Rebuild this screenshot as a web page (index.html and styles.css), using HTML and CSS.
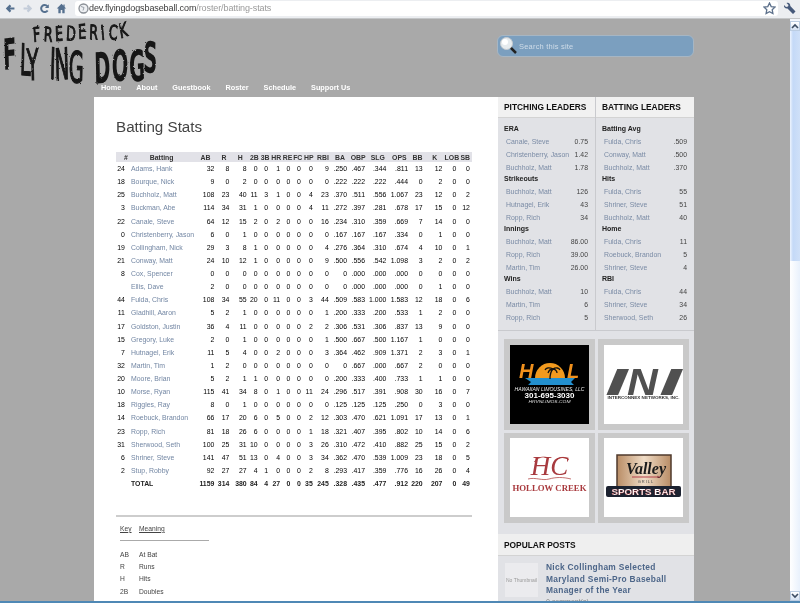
FILE: index.html
```html
<html>
<head>
    <meta charset="UTF-8">
    <link rel="stylesheet" href="styles.css">
</head>

<body>

<div class="toolbar">
    <div class="nav_buttons">
        <svg width="11" height="11" viewBox="0 0 14 14"><path d="M12 7H4M7 3L3 7l4 4" fill="none" stroke="#55708f" stroke-width="2.8"/></svg>
        <svg width="11" height="11" viewBox="0 0 14 14"><path d="M2 7h8M7 3l4 4-4 4" fill="none" stroke="#c3ccd9" stroke-width="2.8"/></svg>
        <svg width="11" height="11" viewBox="0 0 14 14"><path d="M11 9.500A4.500 4.500 0 1 1 10.600 4" fill="none" stroke="#55708f" stroke-width="2.600"/><path d="M12.500 1.500v5h-5z" fill="#55708f"/></svg>
        <svg width="11" height="11" viewBox="0 0 14 14"><path d="M7 1L1 7h2v6h3V9h2v4h3V7h2l-2-2V2H9.500v1.500z" fill="#55708f"/></svg>
    </div>
    <div class="address">
        <svg width="11" height="11" viewBox="0 0 11 11"><circle cx="5.500" cy="5.500" r="4.500" fill="#eef0f3" stroke="#8a8f96" stroke-width="1.300"/><path d="M3 3.500l3 1-1 3" fill="none" stroke="#9aa0a8"/></svg>
        <span class="url"><b>dev.flyingdogsbaseball.com</b>/roster/batting-stats</span>
        <svg class="star" width="13" height="13" viewBox="0 0 13 13"><path d="M6.500 1l1.700 3.600 3.800.500-2.800 2.600.7 3.900-3.400-1.900-3.400 1.900.7-3.900L1 5.100l3.800-.5z" fill="#fff" stroke="#5d718c" stroke-width="1.300"/></svg>
    </div>
    <svg class="wrench" width="13" height="13" viewBox="0 0 13 13"><path d="M1 3l2 2 2-.5L5.500 3 3.500 1C5.500 0 7.500 1.500 7.300 4L12.500 9.500 10 12 4.500 6.500C2.500 7 .5 5.500 1 3z" fill="#46597a"/></svg>
</div>

<div class="viewport">
    <div class="page">
        <div class="masthead">
            <svg class="logo" width="160" height="68" viewBox="0 0 160 68">
                <defs>
                    <filter id="rough" x="-5%" y="-5%" width="110%" height="110%">
                        <feTurbulence type="fractalNoise" baseFrequency="0.35" numOctaves="2" seed="4"/>
                        <feDisplacementMap in="SourceGraphic" scale="2.200"/>
                    </filter>
                </defs>
                <g filter="url(#rough)" fill="#141414">
                    <g transform="scale(0.7 1)">
                        <text class="logo_small" x="48 62 79 94 112 127 145 155 172" y="23 22 22 21 20 20 21 20 19.500" rotate="-6 4 -3 5 -4 3 -8 4 -14">FREDERICK</text>
                    </g>
                    <g transform="scale(0.9 1.8)">
                        <text class="logo_big" x="4 22 30 55 61 76 100 105 124 144 159" y="28.300 31 34 33 34 35 35 36 34 35 29.500" rotate="-3 2 -2 3 -3 2 0 -2 2 -3 3">F<tspan class="logo_thin">LYING</tspan> DOGS</text>
                    </g>
                </g>
            </svg>
            <div class="search">
                <svg width="20" height="20" viewBox="0 0 20 20"><path d="M11 11l6 6" stroke="#222" stroke-width="2.500"/><circle cx="7.500" cy="7.500" r="6" fill="#e6ebee" stroke="#c7ccd0"/><circle cx="6" cy="6" r="3" fill="#fff"/></svg>
                <span>Search this site</span>
            </div>
        </div>

        <div class="menu">
            <a>Home</a>
            <a>About</a>
            <a>Guestbook</a>
            <a>Roster</a>
            <a>Schedule</a>
            <a>Support Us</a>
        </div>

        <div class="wrap">
            <div class="content">
                <h1>Batting Stats</h1>

                <table class="stats">
                    <colgroup>
                        <col class="c_num"><col class="c_name"><col class="c_ab"><col class="c_r"><col class="c_h"><col class="c_2b"><col class="c_3b"><col class="c_hr"><col class="c_re"><col class="c_fc"><col class="c_hp"><col class="c_rbi"><col class="c_ba"><col class="c_obp"><col class="c_slg"><col class="c_ops"><col class="c_bb"><col class="c_k"><col class="c_lob"><col class="c_sb">
                    </colgroup>
                    <tr><th class="num">#</th><th>Batting</th><th>AB</th><th>R</th><th>H</th><th>2B</th><th>3B</th><th>HR</th><th>RE</th><th>FC</th><th>HP</th><th>RBI</th><th>BA</th><th>OBP</th><th>SLG</th><th>OPS</th><th>BB</th><th>K</th><th>LOB</th><th>SB</th></tr>
                    <tr><td class="num">24</td><td class="name">Adams, Hank</td><td>32</td><td>8</td><td>8</td><td>0</td><td>0</td><td>1</td><td>0</td><td>0</td><td>0</td><td>9</td><td>.250</td><td>.467</td><td>.344</td><td>.811</td><td>13</td><td>12</td><td>0</td><td>0</td></tr>
                    <tr><td class="num">18</td><td class="name">Bourque, Nick</td><td>9</td><td>0</td><td>2</td><td>0</td><td>0</td><td>0</td><td>0</td><td>0</td><td>0</td><td>0</td><td>.222</td><td>.222</td><td>.222</td><td>.444</td><td>0</td><td>2</td><td>0</td><td>0</td></tr>
                    <tr><td class="num">25</td><td class="name">Buchholz, Matt</td><td>108</td><td>23</td><td>40</td><td>11</td><td>3</td><td>1</td><td>0</td><td>0</td><td>4</td><td>23</td><td>.370</td><td>.511</td><td>.556</td><td>1.067</td><td>23</td><td>12</td><td>0</td><td>2</td></tr>
                    <tr><td class="num">3</td><td class="name">Buckman, Abe</td><td>114</td><td>34</td><td>31</td><td>1</td><td>0</td><td>0</td><td>0</td><td>0</td><td>4</td><td>11</td><td>.272</td><td>.397</td><td>.281</td><td>.678</td><td>17</td><td>15</td><td>0</td><td>12</td></tr>
                    <tr><td class="num">22</td><td class="name">Canale, Steve</td><td>64</td><td>12</td><td>15</td><td>2</td><td>0</td><td>2</td><td>0</td><td>0</td><td>0</td><td>16</td><td>.234</td><td>.310</td><td>.359</td><td>.669</td><td>7</td><td>14</td><td>0</td><td>0</td></tr>
                    <tr><td class="num">0</td><td class="name">Christenberry, Jason</td><td>6</td><td>0</td><td>1</td><td>0</td><td>0</td><td>0</td><td>0</td><td>0</td><td>0</td><td>0</td><td>.167</td><td>.167</td><td>.167</td><td>.334</td><td>0</td><td>1</td><td>0</td><td>0</td></tr>
                    <tr><td class="num">19</td><td class="name">Collingham, Nick</td><td>29</td><td>3</td><td>8</td><td>1</td><td>0</td><td>0</td><td>0</td><td>0</td><td>0</td><td>4</td><td>.276</td><td>.364</td><td>.310</td><td>.674</td><td>4</td><td>10</td><td>0</td><td>1</td></tr>
                    <tr><td class="num">21</td><td class="name">Conway, Matt</td><td>24</td><td>10</td><td>12</td><td>1</td><td>0</td><td>0</td><td>0</td><td>0</td><td>0</td><td>9</td><td>.500</td><td>.556</td><td>.542</td><td>1.098</td><td>3</td><td>2</td><td>0</td><td>2</td></tr>
                    <tr><td class="num">8</td><td class="name">Cox, Spencer</td><td>0</td><td>0</td><td>0</td><td>0</td><td>0</td><td>0</td><td>0</td><td>0</td><td>0</td><td>0</td><td>0</td><td>.000</td><td>.000</td><td>.000</td><td>0</td><td>0</td><td>0</td><td>0</td></tr>
                    <tr><td class="num"></td><td class="name">Ellis, Dave</td><td>2</td><td>0</td><td>0</td><td>0</td><td>0</td><td>0</td><td>0</td><td>0</td><td>0</td><td>0</td><td>0</td><td>.000</td><td>.000</td><td>.000</td><td>0</td><td>1</td><td>0</td><td>0</td></tr>
                    <tr><td class="num">44</td><td class="name">Fulda, Chris</td><td>108</td><td>34</td><td>55</td><td>20</td><td>0</td><td>11</td><td>0</td><td>0</td><td>3</td><td>44</td><td>.509</td><td>.583</td><td>1.000</td><td>1.583</td><td>12</td><td>18</td><td>0</td><td>6</td></tr>
                    <tr><td class="num">11</td><td class="name">Gladhill, Aaron</td><td>5</td><td>2</td><td>1</td><td>0</td><td>0</td><td>0</td><td>0</td><td>0</td><td>0</td><td>1</td><td>.200</td><td>.333</td><td>.200</td><td>.533</td><td>1</td><td>2</td><td>0</td><td>0</td></tr>
                    <tr><td class="num">17</td><td class="name">Goldston, Justin</td><td>36</td><td>4</td><td>11</td><td>0</td><td>0</td><td>0</td><td>0</td><td>0</td><td>2</td><td>2</td><td>.306</td><td>.531</td><td>.306</td><td>.837</td><td>13</td><td>9</td><td>0</td><td>0</td></tr>
                    <tr><td class="num">15</td><td class="name">Gregory, Luke</td><td>2</td><td>0</td><td>1</td><td>0</td><td>0</td><td>0</td><td>0</td><td>0</td><td>0</td><td>1</td><td>.500</td><td>.667</td><td>.500</td><td>1.167</td><td>1</td><td>0</td><td>0</td><td>0</td></tr>
                    <tr><td class="num">7</td><td class="name">Hutnagel, Erik</td><td>11</td><td>5</td><td>4</td><td>0</td><td>0</td><td>2</td><td>0</td><td>0</td><td>0</td><td>3</td><td>.364</td><td>.462</td><td>.909</td><td>1.371</td><td>2</td><td>3</td><td>0</td><td>1</td></tr>
                    <tr><td class="num">32</td><td class="name">Martin, Tim</td><td>1</td><td>2</td><td>0</td><td>0</td><td>0</td><td>0</td><td>0</td><td>0</td><td>0</td><td>0</td><td>0</td><td>.667</td><td>.000</td><td>.667</td><td>2</td><td>0</td><td>0</td><td>0</td></tr>
                    <tr><td class="num">20</td><td class="name">Moore, Brian</td><td>5</td><td>2</td><td>1</td><td>1</td><td>0</td><td>0</td><td>0</td><td>0</td><td>0</td><td>0</td><td>.200</td><td>.333</td><td>.400</td><td>.733</td><td>1</td><td>1</td><td>0</td><td>0</td></tr>
                    <tr><td class="num">10</td><td class="name">Morse, Ryan</td><td>115</td><td>41</td><td>34</td><td>8</td><td>0</td><td>1</td><td>0</td><td>0</td><td>11</td><td>24</td><td>.296</td><td>.517</td><td>.391</td><td>.908</td><td>30</td><td>16</td><td>0</td><td>7</td></tr>
                    <tr><td class="num">18</td><td class="name">Riggles, Ray</td><td>8</td><td>0</td><td>1</td><td>0</td><td>0</td><td>0</td><td>0</td><td>0</td><td>0</td><td>0</td><td>.125</td><td>.125</td><td>.125</td><td>.250</td><td>0</td><td>3</td><td>0</td><td>0</td></tr>
                    <tr><td class="num">14</td><td class="name">Roebuck, Brandon</td><td>66</td><td>17</td><td>20</td><td>6</td><td>0</td><td>5</td><td>0</td><td>0</td><td>2</td><td>12</td><td>.303</td><td>.470</td><td>.621</td><td>1.091</td><td>17</td><td>13</td><td>0</td><td>1</td></tr>
                    <tr><td class="num">23</td><td class="name">Ropp, Rich</td><td>81</td><td>18</td><td>26</td><td>6</td><td>0</td><td>0</td><td>0</td><td>0</td><td>1</td><td>18</td><td>.321</td><td>.407</td><td>.395</td><td>.802</td><td>10</td><td>14</td><td>0</td><td>6</td></tr>
                    <tr><td class="num">31</td><td class="name">Sherwood, Seth</td><td>100</td><td>25</td><td>31</td><td>10</td><td>0</td><td>0</td><td>0</td><td>0</td><td>3</td><td>26</td><td>.310</td><td>.472</td><td>.410</td><td>.882</td><td>25</td><td>15</td><td>0</td><td>2</td></tr>
                    <tr><td class="num">6</td><td class="name">Shriner, Steve</td><td>141</td><td>47</td><td>51</td><td>13</td><td>0</td><td>4</td><td>0</td><td>0</td><td>3</td><td>34</td><td>.362</td><td>.470</td><td>.539</td><td>1.009</td><td>23</td><td>18</td><td>0</td><td>5</td></tr>
                    <tr><td class="num">2</td><td class="name">Stup, Robby</td><td>92</td><td>27</td><td>27</td><td>4</td><td>1</td><td>0</td><td>0</td><td>0</td><td>2</td><td>8</td><td>.293</td><td>.417</td><td>.359</td><td>.776</td><td>16</td><td>26</td><td>0</td><td>4</td></tr>
                    <tr class="total"><td class="num"></td><td class="name">TOTAL</td><td>1159</td><td>314</td><td>380</td><td>84</td><td>4</td><td>27</td><td>0</td><td>0</td><td>35</td><td>245</td><td>.328</td><td>.435</td><td>.477</td><td>.912</td><td>220</td><td>207</td><td>0</td><td>49</td></tr>
                </table>

                <hr class="rule">

                <table class="key">
                    <tr class="key_head"><td>Key</td><td>Meaning</td></tr>
                    <tr class="key_line"><td colspan="2"></td></tr>
                    <tr><td>AB</td><td>At Bat</td></tr>
                    <tr><td>R</td><td>Runs</td></tr>
                    <tr><td>H</td><td>Hits</td></tr>
                    <tr><td>2B</td><td>Doubles</td></tr>
                </table>
            </div>

            <div class="sidebar">
                <div class="leaders">
                    <div class="leader_col">
                        <h3>PITCHING LEADERS</h3>
                        <div class="leader_body">
                            <h4>ERA</h4>
                            <div class="leader"><a>Canale, Steve</a><span>0.75</span></div>
                            <div class="leader"><a>Christenberry, Jason</a><span>1.42</span></div>
                            <div class="leader"><a>Buchholz, Matt</a><span>1.78</span></div>
                            <h4>Strikeouts</h4>
                            <div class="leader"><a>Buchholz, Matt</a><span>126</span></div>
                            <div class="leader"><a>Hutnagel, Erik</a><span>43</span></div>
                            <div class="leader"><a>Ropp, Rich</a><span>34</span></div>
                            <h4>Innings</h4>
                            <div class="leader"><a>Buchholz, Matt</a><span>86.00</span></div>
                            <div class="leader"><a>Ropp, Rich</a><span>39.00</span></div>
                            <div class="leader"><a>Martin, Tim</a><span>26.00</span></div>
                            <h4>Wins</h4>
                            <div class="leader"><a>Buchholz, Matt</a><span>10</span></div>
                            <div class="leader"><a>Martin, Tim</a><span>6</span></div>
                            <div class="leader"><a>Ropp, Rich</a><span>5</span></div>
                        </div>
                    </div>
                    <div class="leader_col">
                        <h3>BATTING LEADERS</h3>
                        <div class="leader_body">
                            <h4>Batting Avg</h4>
                            <div class="leader"><a>Fulda, Chris</a><span>.509</span></div>
                            <div class="leader"><a>Conway, Matt</a><span>.500</span></div>
                            <div class="leader"><a>Buchholz, Matt</a><span>.370</span></div>
                            <h4>Hits</h4>
                            <div class="leader"><a>Fulda, Chris</a><span>55</span></div>
                            <div class="leader"><a>Shriner, Steve</a><span>51</span></div>
                            <div class="leader"><a>Buchholz, Matt</a><span>40</span></div>
                            <h4>Home</h4>
                            <div class="leader"><a>Fulda, Chris</a><span>11</span></div>
                            <div class="leader"><a>Roebuck, Brandon</a><span>5</span></div>
                            <div class="leader"><a>Shriner, Steve</a><span>4</span></div>
                            <h4>RBI</h4>
                            <div class="leader"><a>Fulda, Chris</a><span>44</span></div>
                            <div class="leader"><a>Shriner, Steve</a><span>34</span></div>
                            <div class="leader"><a>Sherwood, Seth</a><span>26</span></div>
                        </div>
                    </div>
                </div>

                <div class="sponsors">
                    <div class="sponsor">
                        <svg class="ad ad_black" width="79" height="79" viewBox="0 0 79 79">
                            <path d="M25 33a15 15 0 0 1 30 0z" fill="#f29a1e"/>
                            <text x="9" y="33" class="hol">H</text>
                            <text x="57" y="33" class="hol">L</text>
                            <path d="M15 33h50l-4 4 3 3H18l3-3z" fill="#2390cf"/>
                            <path d="M40 34c0-5 1-8 3-10M43 24c-4-2-7-1-8 1M43 24c3-2 6-1 7 1M43 24c-2 0-4 1-5 4M43 24c2 0 4 2 4 4" fill="none" stroke="#111" stroke-width="1.300"/>
                            <text x="39.500" y="46" class="hol_name" textLength="70" lengthAdjust="spacingAndGlyphs">HAWAIIAN LIMOUSINES, LLC</text>
                            <text x="39.500" y="53" class="hol_phone" textLength="50" lengthAdjust="spacingAndGlyphs">301-695-3030</text>
                            <text x="39.500" y="58" class="hol_site" textLength="42" lengthAdjust="spacingAndGlyphs">HRVNLIMOS.COM</text>
                        </svg>
                    </div>
                    <div class="sponsor">
                        <svg class="ad" width="79" height="79" viewBox="0 0 79 79">
                            <text class="ini" transform="translate(1 50) scale(2.200 1)">I</text>
                            <text class="ini" transform="translate(23 50) scale(1.150 1)">N</text>
                            <text class="ini" transform="translate(55 50) scale(2.200 1)">I</text>
                            <text x="39.500" y="54" class="ini_name" textLength="72" lengthAdjust="spacingAndGlyphs">INTERCONNEX NETWORKS, INC.</text>
                        </svg>
                    </div>
                    <div class="sponsor">
                        <svg class="ad" width="79" height="79" viewBox="0 0 79 79">
                            <text x="39.500" y="37" class="hc">HC</text>
                            <path d="M24 24c4-5 10-6 14-4M46 22c5-4 10-3 13 0M18 41c8-2 14 2 21 0s14-2 22 0" fill="none" stroke="#a33" stroke-width="0.700"/>
                            <text x="39.500" y="52.500" class="hc_name" textLength="74" lengthAdjust="spacingAndGlyphs">HOLLOW CREEK</text>
                        </svg>
                    </div>
                    <div class="sponsor">
                        <svg class="ad" width="79" height="79" viewBox="0 0 79 79">
                            <defs>
                                <linearGradient id="tan" x1="0" x2="1"><stop offset="0" stop-color="#b98d66"/><stop offset="0.500" stop-color="#f0dcc6"/><stop offset="1" stop-color="#b98d66"/></linearGradient>
                            </defs>
                            <rect x="13" y="17" width="54" height="34" fill="url(#tan)" stroke="#4f3a2c" stroke-width="1.500"/>
                            <text x="42" y="36" class="valley">Valley</text>
                            <path d="M28 39h28" stroke="#b5404a" stroke-width="1"/>
                            <text x="42" y="45" class="grill">GRILL</text>
                            <rect x="2" y="48" width="75" height="11" rx="2" fill="#1c2230"/>
                            <text x="39.500" y="57" class="bar" textLength="64" lengthAdjust="spacingAndGlyphs">SPORTS BAR</text>
                        </svg>
                    </div>
                </div>

                <div class="popular">
                    <h3>POPULAR POSTS</h3>
                    <div class="post">
                        <div class="thumb">No Thumbnail</div>
                        <div>
                            <a class="post_title">Nick Collingham Selected Maryland Semi-Pro Baseball Manager of the Year</a>
                            <p>0 comment(s)</p>
                        </div>
                    </div>
                </div>
            </div>
        </div>
    </div>

    <div class="scrollbar">
        <div class="scroll_btn">
            <svg width="8" height="6" viewBox="0 0 8 6"><path d="M1 5l3-3 3 3" fill="none" stroke="#3d4d63" stroke-width="1.600"/></svg>
        </div>
        <div class="scroll_thumb"></div>
        <div class="scroll_track"></div>
        <div class="scroll_btn">
            <svg width="8" height="6" viewBox="0 0 8 6"><path d="M1 1l3 3 3-3" fill="none" stroke="#3d4d63" stroke-width="1.600"/></svg>
        </div>
    </div>
</div>

<div class="statusline"></div>

</body>

</html>
```

FILE: styles.css
```css
html, body {
    height: 100%;
}

body {
    margin: 0;
    height: 603px;
    overflow: hidden;
    display: flex;
    flex-direction: column;
    font-family: "Liberation Sans", Arial, sans-serif;
    background: #a9a9a9;
}

/* browser chrome */
.toolbar {
    height: 19px;
    flex: none;
    display: flex;
    align-items: center;
    background: #eceef1;
    border-bottom: 1px solid #c4c6c8;
    box-sizing: border-box;
    filter: blur(0.3px);
}

.nav_buttons {
    width: 75px;
    flex: none;
    display: flex;
    gap: 6px;
    padding: 0 0 2px 4.500px;
    box-sizing: border-box;
}

.address {
    width: 703px;
    height: 15px;
    margin-bottom: 2px;
    flex: none;
    display: flex;
    align-items: center;
    padding: 0 2px 0 3px;
    box-sizing: border-box;
    background: white;
    border-radius: 3px;
}

.url {
    flex: 1;
    font-size: 9px;
    letter-spacing: -0.1px;
    color: #9a9a9a;
}

.url b {
    font-weight: normal;
    color: #3a3a3a;
}

.wrench {
    margin: 0 0 2px 5px;
}

.viewport {
    flex: 1;
    min-height: 0;
    display: flex;
}

.page {
    flex: 1;
    min-width: 0;
    overflow: hidden;
    display: flex;
    flex-direction: column;
    filter: blur(0.3px);
}

/* header */
.masthead {
    height: 62px;
    flex: none;
    display: flex;
    align-items: flex-start;
    justify-content: space-between;
    padding-right: 96px;
}

.logo {
    flex: none;
    overflow: visible;
}

.logo_small {
    font-family: "DejaVu Sans Condensed", "DejaVu Sans", sans-serif;
    font-size: 20px;
    stroke: #141414;
    stroke-width: 0.900px;
}

.logo_big {
    font-family: "DejaVu Sans Condensed", "DejaVu Sans", sans-serif;
    font-weight: bold;
    font-size: 24px;
}

.logo_thin {
    font-weight: normal;
    stroke: #141414;
    stroke-width: 0.700px;
}

.search {
    width: 197px;
    height: 22px;
    margin-top: 16px;
    display: flex;
    align-items: center;
    box-sizing: border-box;
    padding-left: 1px;
    background: #7b9fbf;
    border: 1px solid #a6b6c4;
    border-radius: 6px;
    font-size: 7.5px;
    letter-spacing: 0.2px;
    color: #cfdce8;
}

.menu {
    height: 16px;
    flex: none;
    display: flex;
    gap: 15px;
    padding-left: 101px;
    font-size: 7.3px;
    font-weight: bold;
    line-height: 14px;
    color: white;
}

.wrap {
    flex: 1;
    min-height: 0;
    display: flex;
    width: 600px;
    margin-left: 94px;
}

/* main column */
.content {
    width: 404px;
    flex: none;
    box-sizing: border-box;
    padding: 20px 26px 0 22px;
    background: white;
    color: #444;
}

h1 {
    margin: 0 0 15px;
    font-size: 15.2px;
    line-height: 20px;
    font-weight: normal;
    color: #444;
}

.stats {
    width: 356px;
    table-layout: fixed;
    border-collapse: collapse;
    font-size: 6.9px;
}

.stats th {
    height: 10px;
    padding: 0;
    background: #e2e2e8;
    font-weight: bold;
    text-align: center;
    color: #333;
}

.stats td {
    height: 13.125px;
    padding: 0 2.200px 0 0;
    text-align: right;
    white-space: nowrap;
}

.stats th.num {
    padding-left: 7px;
}

.stats td.num {
    padding-right: 4px;
}

.stats td.name {
    padding-left: 2.200px;
    text-align: left;
    color: #7286a3;
}

.total td {
    font-weight: bold;
    color: #222;
}

.stats .total td.name {
    color: #222;
}

.c_num { width: 12.8px; }
.c_name { width: 65.7px; }
.c_ab { width: 22px; }
.c_r { width: 15px; }
.c_h { width: 17.3px; }
.c_2b { width: 11px; }
.c_3b { width: 10.5px; }
.c_hr { width: 12px; }
.c_re { width: 10.3px; }
.c_fc { width: 10.3px; }
.c_hp { width: 12px; }
.c_rbi { width: 16px; }
.c_ba { width: 18.3px; }
.c_obp { width: 18px; }
.c_slg { width: 21.3px; }
.c_ops { width: 21.7px; }
.c_bb { width: 14.7px; }
.c_k { width: 19.7px; }
.c_lob { width: 14px; }
.c_sb { width: 13.3px; }

.rule {
    width: 356px;
    height: 2px;
    margin: 25px 0 0;
    border: none;
    background: #cdcdcd;
}

.key {
    width: 89px;
    margin: 5px 0 0 4px;
    border-collapse: collapse;
    font-size: 6.7px;
    color: #444;
}

.key td {
    height: 12.5px;
    padding: 0;
}

.key td:first-child {
    width: 19px;
}

.key_head td {
    text-decoration: underline;
}

.key .key_line td {
    height: 6px;
    border-bottom: 1px solid #aaa;
}

.key .key_line + tr td {
    height: 19.5px;
    padding-top: 7px;
}

/* sidebar */
.sidebar {
    width: 196px;
    flex: none;
    background: #e1e2e6;
}

.leaders {
    height: 234px;
    display: grid;
    grid-template-columns: 98px 98px;
    box-sizing: border-box;
    border-bottom: 1px solid #c9cace;
}

.leader_col:first-child {
    border-right: 1px solid #c9cace;
}

h3 {
    height: 21px;
    margin: 0;
    padding-left: 6px;
    box-sizing: border-box;
    background: #f1f1f1;
    border-bottom: 1px solid #d3d3d3;
    font-size: 8.4px;
    line-height: 21px;
    color: #111;
    white-space: nowrap;
}

.leader_body {
    padding: 6.300px 7px 0 6px;
}

h4 {
    height: 10.4px;
    margin: 0;
    font-size: 7px;
    line-height: 10.4px;
    color: #222;
}

.leader {
    height: 13.2px;
    display: flex;
    justify-content: space-between;
    padding-left: 2px;
    font-size: 6.9px;
    line-height: 13.2px;
    color: #444;
}

.leader a {
    color: #7a8ba5;
    white-space: nowrap;
}

.sponsors {
    display: grid;
    grid-template-columns: 91px 91px;
    grid-auto-rows: 90.5px;
    gap: 3px;
    padding: 8px 0 11px 6px;
}

.sponsor {
    display: flex;
    align-items: center;
    justify-content: center;
    background: #c9c9c9;
}

.ad {
    background: white;
}

.ad_black {
    background: black;
}

.ad text {
    text-anchor: middle;
    font-family: "Liberation Sans", Arial, sans-serif;
}

.ad .hol {
    text-anchor: start;
    font-size: 20px;
    font-weight: bold;
    font-style: italic;
    fill: #f0901c;
}

.ad .hol_name {
    font-size: 5px;
    font-style: italic;
    fill: #eee;
}

.ad .hol_phone {
    font-size: 6.500px;
    font-weight: bold;
    fill: white;
}

.ad .hol_site {
    font-size: 4px;
    font-style: italic;
    fill: #ddd;
}

.ad .ini {
    text-anchor: start;
    font-size: 37px;
    font-weight: bold;
    font-style: italic;
    fill: #505050;
}

.ad .ini_name {
    font-size: 4px;
    font-weight: bold;
    fill: #333;
}

.ad .hc {
    font-family: "Liberation Serif", serif;
    font-size: 27px;
    font-style: italic;
    fill: #a83a3f;
}

.ad .hc_name {
    font-family: "Liberation Serif", serif;
    font-size: 9px;
    font-weight: bold;
    fill: #a8383c;
}

.ad .valley {
    font-family: "Liberation Serif", serif;
    font-size: 16px;
    font-style: italic;
    font-weight: bold;
    fill: #1b1b1b;
}

.ad .grill {
    font-size: 4px;
    letter-spacing: 1px;
    fill: #444;
}

.ad .bar {
    font-size: 8.500px;
    font-weight: bold;
    fill: white;
    stroke: #c33;
    stroke-width: 0.200px;
}

.popular h3 {
    height: 22px;
    line-height: 22px;
    background: #efefef;
}

.post {
    display: flex;
    gap: 8px;
    padding: 7px 6px 0 7px;
}

.thumb {
    width: 33px;
    height: 34px;
    flex: none;
    display: flex;
    align-items: center;
    justify-content: center;
    text-align: center;
    background: #ebebee;
    font-size: 5px;
    line-height: 6px;
    color: #999;
}

.post_title {
    display: block;
    margin-top: -1px;
    font-size: 8.4px;
    line-height: 11.5px;
    font-weight: bold;
    letter-spacing: 0.3px;
    color: #4d6689;
}

.post p {
    margin: 1px 0 0;
    font-size: 7px;
    color: #888;
}

/* fake scrollbar, it belongs to the browser window */
.scrollbar {
    width: 10px;
    flex: none;
    display: flex;
    flex-direction: column;
    padding-top: 2px;
    box-sizing: border-box;
    background: #f3f6fb;
}

.scroll_btn {
    height: 10px;
    flex: none;
    display: flex;
    align-items: center;
    justify-content: center;
    background: linear-gradient(#ffffff, #d5e2f3);
    border: 1px solid #bccde2;
    box-sizing: border-box;
}

.scroll_thumb {
    height: 230px;
    flex: none;
    background: linear-gradient(to right, #eef4fd, #c4d9f7 30%, #cfe0f8);
}

.scroll_track {
    flex: 1;
    background: linear-gradient(to right, #ffffff, #e9f1fc);
}

.statusline {
    height: 2px;
    flex: none;
    background: #4f88b5;
}
```
